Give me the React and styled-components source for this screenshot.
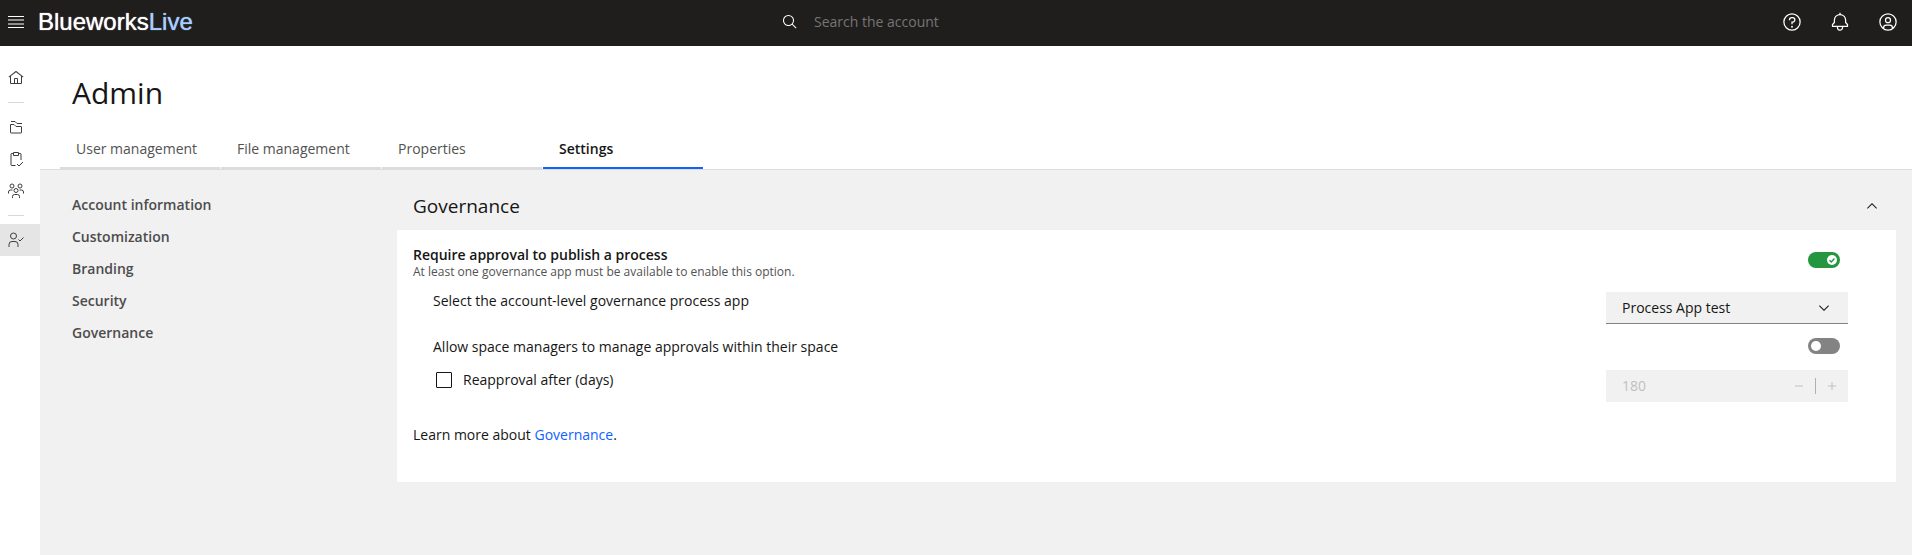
import React, { useState } from 'react';
import styled, { createGlobalStyle } from 'styled-components';

const GlobalStyle = createGlobalStyle`
  * {
    box-sizing: border-box;
  }
  body {
    margin: 0;
    background: #f1f1f1;
    color: #161616;
    font-family: "Open Sans", "Noto Sans", sans-serif;
    font-size: 14px;
    line-height: 18px;
  }
  button, input, select {
    font: inherit;
    color: inherit;
  }
`

const Page = styled.div`
  display: flex;
  flex-direction: column;
  min-height: 100vh;
`

const TopBar = styled.header`
  display: grid;
  grid-template-columns: 1fr 360px 1fr;
  align-items: center;
  height: 46px;
  padding-bottom: 2px;
  background: #201e1d;
  color: #fff;
`

const Brand = styled.div`
  display: flex;
  align-items: center;
`

const IconButton = styled.button`
  display: flex;
  align-items: center;
  justify-content: center;
  width: ${props => props.$width || 48}px;
  height: 32px;
  padding: 0;
  border: none;
  background: none;
  cursor: pointer;
`

const Logo = styled.a`
  margin-left: 6px;
  color: #fff;
  font-family: "Liberation Sans", Arial, sans-serif;
  font-size: 24px;
  line-height: 28px;
  text-decoration: none;
  text-shadow: 0 0 1px currentColor;
`

const LogoLive = styled.span`
  color: #a6cfff;
`

const Search = styled.label`
  display: flex;
  align-items: center;
  gap: 16px;
  padding-left: 6px;
`

const SearchInput = styled.input`
  flex: 1;
  min-width: 0;
  padding: 0;
  border: none;
  outline: none;
  background: none;

  &::placeholder {
    color: #757575;
    opacity: 1;
  }
`

const Actions = styled.div`
  display: flex;
  justify-content: flex-end;
`

const Body = styled.div`
  display: flex;
  flex: 1;
`

const Rail = styled.nav`
  display: flex;
  flex-direction: column;
  width: 40px;
  padding-top: 16px;
  background: #fff;
`

const RailLink = styled.a`
  display: flex;
  align-items: center;
  padding-left: 8px;
  height: 32px;
  color: #3d3d3d;
  background: ${props => props.$active ? '#e5e5e5' : 'none'};
`

const RailLine = styled.hr`
  width: 16px;
  margin: 8px 0 8px 8px;
  border: none;
  border-top: 1px solid #d8d8d8;
`

const Content = styled.div`
  flex: 1;
  min-width: 0;
`

const PageHead = styled.div`
  padding: 27px 20px 0;
  background: #fff;
  border-bottom: 1px solid #dcdcdc;
`

const Title = styled.h1`
  margin: 0 12px 16px;
  font-size: 30px;
  font-weight: 400;
  line-height: 40px;
`

const Tabs = styled.div`
  display: flex;
  gap: 1px;
`

const Tab = styled.button`
  width: 160px;
  height: 40px;
  padding: 2px 16px 0;
  border: none;
  border-bottom: 2px solid ${props => props.$active ? '#0f62fe' : '#dcdcdc'};
  background: none;
  color: ${props => props.$active ? '#161616' : '#525252'};
  font-weight: ${props => props.$active ? 600 : 400};
  text-align: left;
  cursor: pointer;
`

const Columns = styled.div`
  display: flex;
  padding: 12px 16px 0 32px;
`

const SideMenu = styled.nav`
  display: flex;
  flex-direction: column;
  width: 325px;
  padding-top: 7px;
`

const SideLink = styled.a`
  height: 32px;
  line-height: 32px;
  color: #4c4c4c;
  font-weight: 600;
  text-decoration: none;
`

const Section = styled.section`
  flex: 1;
  min-width: 0;
`

const SectionHead = styled.div`
  display: flex;
  align-items: center;
  justify-content: space-between;
  height: 48px;
  padding-left: 16px;
`

const SectionTitle = styled.h2`
  margin: 0;
  font-size: 19px;
  font-weight: 400;
  line-height: 28px;
`

const Panel = styled.div`
  padding: 16px 48px 38px 16px;
  background: #fff;
`

const Row = styled.div`
  display: flex;
  align-items: flex-start;
  justify-content: space-between;
  height: ${props => props.$height}px;
  padding-left: ${props => props.$indent ? 20 : 0}px;
`

const RowLabel = styled.label`
  display: block;
  font-weight: ${props => props.$bold ? 600 : 400};
`

const Helper = styled.p`
  margin: 0;
  color: #525252;
  font-size: 12px;
  line-height: 16px;
`

const Toggle = styled.span`
  position: relative;
  display: flex;
  width: 32px;
  height: 16px;
  margin-right: 8px;
  margin-top: ${props => props.$drop ? 6 : 0}px;
  color: #24963f;
`

const ToggleInput = styled.input`
  appearance: none;
  width: 32px;
  height: 16px;
  margin: 0;
  border-radius: 8px;
  background: ${props => props.checked ? '#24963f' : '#838383'};
  cursor: pointer;
`

const Knob = styled.svg`
  position: absolute;
  top: 3px;
  left: ${props => props.$on ? 19 : 3}px;
  pointer-events: none;
`

const SelectWrap = styled.div`
  position: relative;
  display: flex;
  width: 242px;
`

const Select = styled.select`
  appearance: none;
  width: 100%;
  height: 32px;
  padding: 0 40px 0 16px;
  border: none;
  border-bottom: 1px solid #838383;
  border-radius: 0;
  background: #f1f1f1;
`

const SelectArrow = styled.span`
  position: absolute;
  top: 8px;
  right: 16px;
  display: flex;
  pointer-events: none;
`

const Check = styled.label`
  display: flex;
  align-items: center;
  gap: 11px;
  height: 20px;
  padding-left: 3px;
`

const CheckInput = styled.input`
  appearance: none;
  width: 16px;
  height: 16px;
  margin: 0;
  border: 1px solid #161616;
  border-radius: 1px;

  &:checked {
    background: #161616;
  }
`

const Stepper = styled.div`
  display: flex;
  align-items: center;
  width: 242px;
  height: 32px;
  background: #f1f1f1;
  color: #c0c0c0;
`

const StepperInput = styled.input`
  flex: 1;
  min-width: 0;
  padding: 0 16px;
  border: none;
  background: none;
`

const StepButton = styled(IconButton)`
  cursor: not-allowed;
`

const StepLine = styled.span`
  width: 1px;
  height: 16px;
  background: #b0b0b0;
`

const LearnMore = styled.p`
  margin: 0;
`

const Link = styled.a`
  color: #0f62fe;
  text-decoration: none;
`

const icons = {
  home: <path d="M16.6123,2.2138a1.01,1.01,0,0,0-1.2427,0L1,13.4194l1.2427,1.5717L4,13.6208V26a2.0041,2.0041,0,0,0,2,2H26a2.0037,2.0037,0,0,0,2-2V13.63L29.7573,15,31,13.4282ZM18,26H14V18h4Zm2,0V18a2.0023,2.0023,0,0,0-2-2H14a2.002,2.002,0,0,0-2,2v8H6V12.0615l10-7.79,10,7.8005V26Z" />,
  search: <path d="M29,27.5859l-7.5521-7.5521a11.0177,11.0177,0,1,0-1.4141,1.4141L27.5859,29ZM4,13a9,9,0,1,1,9,9A9.01,9.01,0,0,1,4,13Z" />,
  help: (
    <>
      <path d="M16 2a14 14 0 1014 14A14 14 0 0016 2zm0 26a12 12 0 1112-12A12 12 0 0116 28z" />
      <circle cx="16" cy="23.5" r="1.5" />
      <path d="M17 8H15.5A4.49 4.49 0 0011 12.5V13h2v-.5A2.5 2.5 0 0115.5 10H17a2.5 2.5 0 010 5H15v4.5h2V17a4.5 4.5 0 000-9z" />
    </>
  ),
  bell: <path d="M28.7071,19.293,26,16.5859V13a10.0136,10.0136,0,0,0-9-9.9492V1H15V3.0508A10.0136,10.0136,0,0,0,6,13v3.5859L3.2929,19.293A1,1,0,0,0,3,20v3a1,1,0,0,0,1,1h7v.7768a5.152,5.152,0,0,0,4.5,5.1987A5.0057,5.0057,0,0,0,21,25V24h7a1,1,0,0,0,1-1V20A1,1,0,0,0,28.7071,19.293ZM19,25a3,3,0,0,1-6,0V24h6Zm8-3H5V20.4141L7.707,17.707A1,1,0,0,0,8,17V13a8,8,0,0,1,16,0v4a1,1,0,0,0,.293.707L27,20.4141Z" />,
  avatar: (
    <>
      <path d="M16,8a5,5,0,1,0,5,5A5,5,0,0,0,16,8Zm0,8a3,3,0,1,1,3-3A3.0034,3.0034,0,0,1,16,16Z" />
      <path d="M16,2A14,14,0,1,0,30,16,14.0158,14.0158,0,0,0,16,2ZM10,26.3765V25a3.0033,3.0033,0,0,1,3-3h6a3.0033,3.0033,0,0,1,3,3v1.3765a11.8989,11.8989,0,0,1-12,0Zm13.9925-1.4507A5.0016,5.0016,0,0,0,19,20H13a5.0016,5.0016,0,0,0-4.9925,4.9258,12,12,0,1,1,15.985,0Z" />
    </>
  ),
  folders: (
    <g fill="none" stroke="currentColor" strokeWidth="2">
      <path d="M5 11h7l4 4h10a1 1 0 0 1 1 1v11a1 1 0 0 1-1 1H6a1 1 0 0 1-1-1Z" />
      <path d="M6 5h8l4 4h10" />
    </g>
  ),
  tasks: (
    <g fill="none" stroke="currentColor" strokeWidth="2">
      <path d="M11 5H7a1 1 0 0 0-1 1v22a1 1 0 0 0 1 1h8M21 5h4a1 1 0 0 1 1 1v12" />
      <path d="M11 3h10v6H11Z" />
      <path d="M18 26l4 4 8-8" />
    </g>
  ),
  group: (
    <g fill="none" stroke="currentColor" strokeWidth="2">
      <circle cx="8" cy="6" r="4" />
      <circle cx="24" cy="6" r="4" />
      <circle cx="16" cy="15" r="4" />
      <path d="M1 21v-3a4 4 0 0 1 4-4h4M31 21v-3a4 4 0 0 0-4-4h-4M9 30v-3a4 4 0 0 1 4-4h6a4 4 0 0 1 4 4v3" />
    </g>
  ),
  userCheck: (
    <g fill="none" stroke="currentColor" strokeWidth="2">
      <circle cx="11" cy="8" r="6" />
      <path d="M2 30v-5a6 6 0 0 1 6-6h6a6 6 0 0 1 6 6v5" />
      <path d="M21 15l3 3 7-7" />
    </g>
  ),
  menu: <path d="M0 4h32v2H0ZM0 11h32v2H0ZM0 19h32v2H0ZM0 26h32v2H0Z" />,
  up: <path d="M16 10 26 20l-1.4 1.4L16 12.8l-8.6 8.6L6 20Z" />,
  down: <path d="M16 22 6 12l1.4-1.4L16 19.2l8.6-8.6L26 12Z" />,
  minus: <path d="M8 15h16v2H8Z" />,
  plus: <path d="M17 15V8h-2v7H8v2h7v7h2v-7h7v-2Z" />,
}

const Icon = ({ name, size = 16 }) => (
  <svg width={size} height={size} viewBox="0 0 32 32" fill="currentColor" aria-hidden="true">
    {icons[name]}
  </svg>
)

const Switch = ({ id, on, drop, onChange }) => (
  <Toggle $drop={drop}>
    <ToggleInput id={id} type="checkbox" role="switch" checked={on} onChange={e => onChange(e.target.checked)} />
    <Knob $on={on} width="10" height="10" viewBox="0 0 10 10">
      <circle cx="5" cy="5" r="5" fill="#fff" />
      {on && <path d="M2.5 5.2 4.3 6.9 7.4 3.6" fill="none" stroke="currentColor" strokeWidth="1.4" />}
    </Knob>
  </Toggle>
)

const tabs = ['User management', 'File management', 'Properties', 'Settings']
const sections = ['Account information', 'Customization', 'Branding', 'Security', 'Governance']

const App = () => {
  const [tab, setTab] = useState('Settings')
  const [required, setRequired] = useState(true)
  const [allowed, setAllowed] = useState(false)

  return (
    <Page>
      <GlobalStyle />
      <TopBar>
        <Brand>
          <IconButton $width={32} aria-label="Menu"><Icon name="menu" /></IconButton>
          <Logo href="#">Blueworks<LogoLive>Live</LogoLive></Logo>
        </Brand>
        <Search>
          <Icon name="search" />
          <SearchInput type="text" placeholder="Search the account" aria-label="Search the account" />
        </Search>
        <Actions>
          <IconButton aria-label="Help"><Icon name="help" size={20} /></IconButton>
          <IconButton aria-label="Notifications"><Icon name="bell" size={20} /></IconButton>
          <IconButton aria-label="Profile"><Icon name="avatar" size={20} /></IconButton>
        </Actions>
      </TopBar>

      <Body>
        <Rail>
          <RailLink href="#" aria-label="Home"><Icon name="home" /></RailLink>
          <RailLine />
          <RailLink href="#" aria-label="Spaces"><Icon name="folders" /></RailLink>
          <RailLink href="#" aria-label="Tasks"><Icon name="tasks" /></RailLink>
          <RailLink href="#" aria-label="Community"><Icon name="group" /></RailLink>
          <RailLine />
          <RailLink href="#" aria-label="Admin" $active><Icon name="userCheck" /></RailLink>
        </Rail>

        <Content>
          <PageHead>
            <Title>Admin</Title>
            <Tabs role="tablist">
              {tabs.map(name => (
                <Tab key={name} role="tab" aria-selected={tab === name} $active={tab === name} onClick={() => setTab(name)}>
                  {name}
                </Tab>
              ))}
            </Tabs>
          </PageHead>

          <Columns>
            <SideMenu>
              {sections.map(name => <SideLink key={name} href="#">{name}</SideLink>)}
            </SideMenu>

            <Section>
              <SectionHead>
                <SectionTitle>Governance</SectionTitle>
                <IconButton aria-label="Collapse"><Icon name="up" /></IconButton>
              </SectionHead>
              <Panel>
                <Row $height={46}>
                  <div>
                    <RowLabel htmlFor="require" $bold>Require approval to publish a process</RowLabel>
                    <Helper>At least one governance app must be available to enable this option.</Helper>
                  </div>
                  <Switch id="require" on={required} drop onChange={setRequired} />
                </Row>
                <Row $height={46} $indent>
                  <RowLabel htmlFor="process-app">Select the account-level governance process app</RowLabel>
                  <SelectWrap>
                    <Select id="process-app">
                      <option>Process App test</option>
                    </Select>
                    <SelectArrow><Icon name="down" /></SelectArrow>
                  </SelectWrap>
                </Row>
                <Row $height={32} $indent>
                  <RowLabel htmlFor="allow">Allow space managers to manage approvals within their space</RowLabel>
                  <Switch id="allow" on={allowed} onChange={setAllowed} />
                </Row>
                <Row $height={56} $indent>
                  <Check>
                    <CheckInput type="checkbox" />
                    Reapproval after (days)
                  </Check>
                  <Stepper>
                    <StepperInput type="text" defaultValue="180" aria-label="Days" disabled />
                    <StepButton $width={32} aria-label="Decrease" disabled><Icon name="minus" /></StepButton>
                    <StepLine />
                    <StepButton $width={32} aria-label="Increase" disabled><Icon name="plus" /></StepButton>
                  </Stepper>
                </Row>
                <LearnMore>Learn more about <Link href="#">Governance</Link>.</LearnMore>
              </Panel>
            </Section>
          </Columns>
        </Content>
      </Body>
    </Page>
  )
}

export default App
